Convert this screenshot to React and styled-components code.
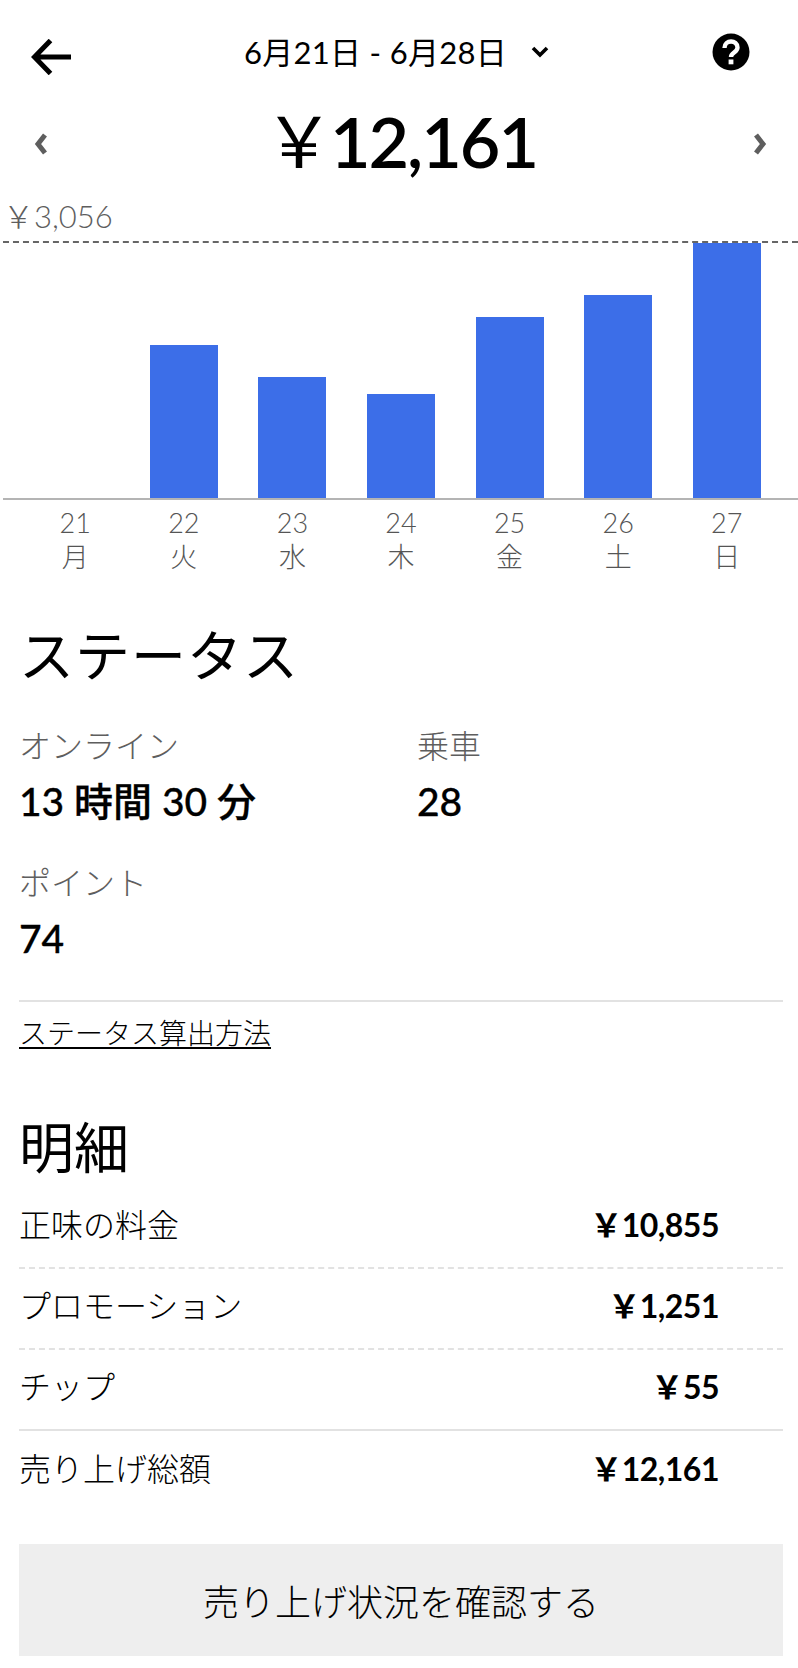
import React from "react";
import styled, { createGlobalStyle } from "styled-components";

const YEN = "\uFFE5";

const bars = [
  { day: "21", week: "月", height: 0 },
  { day: "22", week: "火", height: 153 },
  { day: "23", week: "水", height: 121 },
  { day: "24", week: "木", height: 104 },
  { day: "25", week: "金", height: 181 },
  { day: "26", week: "土", height: 203 },
  { day: "27", week: "日", height: 255 },
];

const rows = [
  { label: "正味の料金", value: "10,855", line: "dashed" },
  { label: "プロモーション", value: "1,251", line: "dashed" },
  { label: "チップ", value: "55", line: "solid" },
  { label: "売り上げ総額", value: "12,161" },
];

export default function App() {
  return (
    <Page>
      <GlobalStyle />
      <Header>
        <IconSlot>
          <svg width="40" height="36" viewBox="0 0 40 36">
            <path d="M19.5 1.5 L3.5 18 L19.5 34.5 M4 18 H40" fill="none" stroke="#000" strokeWidth="5" />
          </svg>
        </IconSlot>
        <DateRange>
          6月21日 - 6月28日
          <svg width="18" height="12" viewBox="0 0 18 12">
            <path d="M2 2 L9 9 L16 2" fill="none" stroke="#000" strokeWidth="3.6" />
          </svg>
        </DateRange>
        <HelpSlot>
          <svg width="38" height="38" viewBox="0 0 38 38">
            <circle cx="19" cy="19" r="18.5" fill="#000" />
            <path d="M12.5 15 C12.5 6.5 25.5 6.5 25.5 14.5 C25.5 19.5 19 19.5 19 24" fill="none" stroke="#fff" strokeWidth="4.4" />
            <rect x="16.6" y="26.5" width="4.8" height="4.8" fill="#fff" />
          </svg>
        </HelpSlot>
      </Header>

      <AmountRow>
        <Chevron>
          <svg width="16" height="22" viewBox="0 0 16 22">
            <path d="M12 2 L5 11 L12 20" fill="none" stroke="#5e5e5e" strokeWidth="5" />
          </svg>
        </Chevron>
        <Amount>
          <AmountYen>{YEN}</AmountYen>12,161
        </Amount>
        <Chevron>
          <svg width="16" height="22" viewBox="0 0 16 22">
            <path d="M4 2 L11 11 L4 20" fill="none" stroke="#5e5e5e" strokeWidth="5" />
          </svg>
        </Chevron>
      </AmountRow>

      <MaxLabel>{YEN}3,056</MaxLabel>
      <Plot>
        {bars.map((b) => (
          <BarSlot key={b.day}>
            <Bar $h={b.height} />
          </BarSlot>
        ))}
      </Plot>
      <Axis>
        {bars.map((b) => (
          <AxisLabel key={b.day}>
            <span>{b.day}</span>
            <span>{b.week}</span>
          </AxisLabel>
        ))}
      </Axis>

      <Section>
        <Heading>ステータス</Heading>
        <StatGrid>
          <Stat>
            <StatLabel>オンライン</StatLabel>
            <StatValue>13 時間 30 分</StatValue>
          </Stat>
          <Stat>
            <StatLabel>乗車</StatLabel>
            <StatValue>28</StatValue>
          </Stat>
          <Stat>
            <StatLabel>ポイント</StatLabel>
            <StatValue>74</StatValue>
          </Stat>
        </StatGrid>
        <HowLink>ステータス算出方法</HowLink>
      </Section>

      <Section>
        <DetailHeading>明細</DetailHeading>
        {rows.map((r) => (
          <Row key={r.label} $line={r.line}>
            <span>{r.label}</span>
            <RowValue>
              {YEN}
              {r.value}
            </RowValue>
          </Row>
        ))}
        <ConfirmButton>売り上げ状況を確認する</ConfirmButton>
      </Section>
    </Page>
  );
}

const GlobalStyle = createGlobalStyle`
  html, body {
    margin: 0;
    background: #fff;
  }
  body {
    font-family: Lato, "Noto Sans CJK JP", "Noto Sans", sans-serif;
    color: #000;
  }
`;

const Page = styled.div`
  width: 798px;
  height: 1668px;
  overflow: hidden;
`;

const Header = styled.div`
  height: 104px;
  box-sizing: border-box;
  padding: 0 48px 0 31px;
  display: flex;
  align-items: center;
  justify-content: space-between;
`;

const IconSlot = styled.div`
  width: 40px;
  height: 36px;
  margin-top: 10px;
  svg {
    display: block;
  }
`;

const HelpSlot = styled(IconSlot)`
  width: 38px;
  height: 38px;
  margin-top: 0;
`;

const DateRange = styled.div`
  display: flex;
  align-items: center;
  gap: 24px;
  margin-left: 10px;
  font-size: 31px;
  line-height: 44px;
  letter-spacing: 0.3px;
`;

const AmountRow = styled.div`
  height: 84px;
  margin-top: -2px;
  padding: 0 30px 0 33px;
  display: flex;
  align-items: center;
  justify-content: space-between;
`;

const Chevron = styled.div`
  width: 16px;
  height: 22px;
  svg {
    display: block;
  }
`;

const Amount = styled.div`
  margin-bottom: 6px;
  font-size: 70px;
  line-height: 84px;
  font-weight: 600;
  letter-spacing: -2px;
`;

const AmountYen = styled.span`
  font-weight: 400;
  letter-spacing: -4px;
`;

const MaxLabel = styled.div`
  padding-left: 3px;
  height: 47px;
  margin-top: 8px;
  font-size: 31px;
  line-height: 44px;
  font-weight: 300;
  color: #5e5e5e;
`;

const Plot = styled.div`
  height: 255px;
  margin-left: 3px;
  padding: 0 17px 0 18px;
  display: grid;
  grid-template-columns: repeat(7, 1fr);
  align-items: end;
  border-top: 2px dashed #666;
  border-bottom: 2px solid #b4b4b4;
`;

const BarSlot = styled.div`
  display: flex;
  justify-content: center;
`;

const Bar = styled.div`
  width: 68px;
  height: ${(p) => p.$h}px;
  background: #3c6ee8;
`;

const Axis = styled.div`
  padding: 6px 17px 0 21px;
  display: grid;
  grid-template-columns: repeat(7, 1fr);
`;

const AxisLabel = styled.div`
  display: flex;
  flex-direction: column;
  align-items: center;
  font-size: 27px;
  line-height: 34px;
  font-weight: 300;
  color: #555;
`;

const Section = styled.section`
  padding: 0 15px 0 19px;
`;

const Heading = styled.h2`
  margin: 45px 0 0;
  font-size: 55px;
  line-height: 72px;
  font-weight: 400;
  letter-spacing: 1px;
`;

const StatGrid = styled.div`
  margin-top: 33px;
  display: grid;
  grid-template-columns: 398px 1fr;
  row-gap: 35px;
  padding-bottom: 37px;
  border-bottom: 2px solid #e2e2e2;
`;

const Stat = styled.div`
  display: flex;
  flex-direction: column;
`;

const StatLabel = styled.div`
  font-size: 32px;
  line-height: 44px;
  font-weight: 300;
  color: #5e5e5e;
`;

const StatValue = styled.div`
  margin-top: 8px;
  font-size: 39px;
  line-height: 50px;
  font-weight: 500;
  -webkit-text-stroke: 0.3px #000;
`;

const HowLink = styled.a`
  display: inline-block;
  margin-top: 9px;
  font-size: 28px;
  line-height: 44px;
  font-weight: 300;
  text-decoration: underline;
  text-underline-offset: 3px;
`;

const DetailHeading = styled.h2`
  margin: 56px 0 0;
  font-size: 55px;
  line-height: 72px;
  font-weight: 400;
`;

const Row = styled.div`
  height: 81px;
  box-sizing: border-box;
  padding: 0 64px 10px 0;
  display: flex;
  align-items: center;
  justify-content: space-between;
  font-size: 32px;
  font-weight: 300;
  border-bottom: ${(p) => (p.$line ? `2px ${p.$line} #e2e2e2` : "none")};
  &:first-of-type {
    margin-top: 5px;
  }
`;

const RowValue = styled.span`
  font-weight: 700;
  letter-spacing: -0.5px;
`;

const ConfirmButton = styled.button`
  display: block;
  width: 764px;
  height: 112px;
  margin-top: 32px;
  border: 0;
  background: #eeeeee;
  font-family: inherit;
  font-size: 36px;
  font-weight: 300;
  color: #000;
`;
